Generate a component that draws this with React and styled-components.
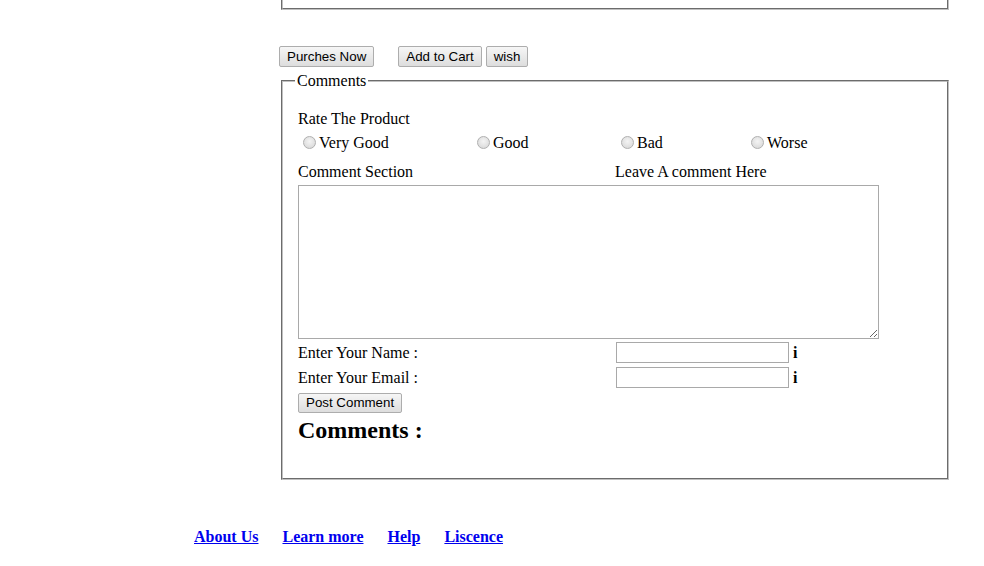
import React from "react";
import styled, { createGlobalStyle } from "styled-components";

const Global = createGlobalStyle`
  html, body { margin: 0; padding: 0; background: #fff; }
  body { font-family: "Liberation Serif", "Times New Roman", serif; font-size: 16px; color: #000; }
`;

const Page = styled.div`
  display: flex;
  flex-direction: column;
  width: 984px;
`;

const Main = styled.div`
  margin-left: 279px;
  width: 672px;
  display: flex;
  flex-direction: column;
`;

const TopBox = styled.div`
  margin: 0 2px;
  height: 8px;
  border: 2px groove #c0c0c0;
  border-top: none;
`;

const ButtonRow = styled.div`
  display: flex;
  align-items: center;
  margin-top: 36px;
  height: 21px;
`;

const Btn = styled.button`
  appearance: none;
  font-family: "Liberation Sans", Arial, sans-serif;
  font-size: 13.33px;
  height: 21px;
  padding: 0 7px;
  margin: 0 ${p => p.$mr || 0}px 0 0;
  border: 1px solid #adadad;
  border-radius: 2px;
  background: linear-gradient(#f6f6f6, #dddddd);
  color: #000;
  line-height: 19px;
  cursor: default;
`;

const Fieldset = styled.fieldset`
  margin: 5px 2px 0;
  padding: 0 15px 34px;
  border: 2px groove #c0c0c0;
  min-width: 0;
`;

const Legend = styled.legend`
  padding: 0 2px;
  margin-left: -3px;
  line-height: 18px;
  font-size: 16px;
`;

const Line = styled.div`
  line-height: 18px;
  height: 18px;
  margin-top: ${p => p.$mt || 0}px;
`;

const RadioRow = styled.div`
  display: grid;
  grid-template-columns: 174px 144px 130px 120px;
  line-height: 18px;
  height: 18px;
  margin-top: ${p => p.$mt || 0}px;
`;

const RadioLabel = styled.label`
  display: flex;
  align-items: center;
`;

const Radio = styled.input.attrs({ type: "radio" })`
  appearance: none;
  width: 13px;
  height: 13px;
  margin: 0 3px 2px 5px;
  border: 1px solid #b0b0b0;
  border-radius: 50%;
  background: radial-gradient(circle at 50% 40%, #f4f4f4, #d4d4d4);
  box-sizing: border-box;
`;

const TwoCol = styled.div`
  display: grid;
  grid-template-columns: ${p => p.$col || 318}px auto;
  align-items: center;
  line-height: 18px;
  margin-top: ${p => p.$mt || 0}px;
`;

const Textarea = styled.textarea`
  display: block;
  box-sizing: border-box;
  width: 581px;
  height: 154px;
  margin-top: ${p => p.$mt || 0}px;
  border: 1px solid #a9a9a9;
  padding: 2px;
  font-family: "Liberation Mono", monospace;
  font-size: 13px;
  resize: both;
`;

const FieldCell = styled.div`
  display: flex;
  align-items: center;
  gap: 4px;
`;

const TextInput = styled.input.attrs({ type: "text" })`
  box-sizing: border-box;
  width: 173px;
  height: 21px;
  border: 1px solid #a9a9a9;
  padding: 1px 2px;
  margin: 0;
  font-size: 13px;
`;

const Info = styled.b`
  font-family: "Liberation Serif", serif;
  font-size: 16px;
  font-weight: bold;
`;

const PostBtn = styled(Btn)`
  align-self: flex-start;
  height: 20px;
  line-height: 18px;
  margin-top: 5px;
`;

const Heading = styled.h2`
  margin: 3px 0 0;
  font-size: 24px;
  font-weight: bold;
  line-height: 28px;
`;

const Inner = styled.div`
  display: flex;
  flex-direction: column;
  padding-top: 20px;
`;

const Footer = styled.nav`
  display: flex;
  gap: 24px;
  margin: 48px 0 0 194px;
  line-height: 18px;
`;

const FootLink = styled.a`
  color: #0000ee;
  font-weight: bold;
  text-decoration: underline;
`;

export default function App() {
  return (
    <Page>
      <Global />
      <Main>
        <TopBox />
        <ButtonRow>
          <Btn $mr={24}>Purches Now</Btn>
          <Btn $mr={4}>Add to Cart</Btn>
          <Btn>wish</Btn>
        </ButtonRow>
        <Fieldset>
          <Legend>Comments</Legend>
          <Inner>
            <Line>Rate The Product</Line>
            <RadioRow $mt={6}>
              <RadioLabel><Radio name="r" />Very Good</RadioLabel>
              <RadioLabel><Radio name="r" />Good</RadioLabel>
              <RadioLabel><Radio name="r" />Bad</RadioLabel>
              <RadioLabel><Radio name="r" />Worse</RadioLabel>
            </RadioRow>
            <TwoCol $mt={11} $col={317}>
              <span>Comment Section</span>
              <span>Leave A comment Here</span>
            </TwoCol>
            <Textarea $mt={4} />
            <TwoCol $mt={3}>
              <span>Enter Your Name :</span>
              <FieldCell><TextInput /><Info>i</Info></FieldCell>
            </TwoCol>
            <TwoCol $mt={4}>
              <span>Enter Your Email :</span>
              <FieldCell><TextInput /><Info>i</Info></FieldCell>
            </TwoCol>
            <PostBtn>Post Comment</PostBtn>
            <Heading>Comments :</Heading>
          </Inner>
        </Fieldset>
      </Main>
      <Footer>
        <FootLink href="#">About Us</FootLink>
        <FootLink href="#">Learn more</FootLink>
        <FootLink href="#">Help</FootLink>
        <FootLink href="#">Liscence</FootLink>
      </Footer>
    </Page>
  );
}
